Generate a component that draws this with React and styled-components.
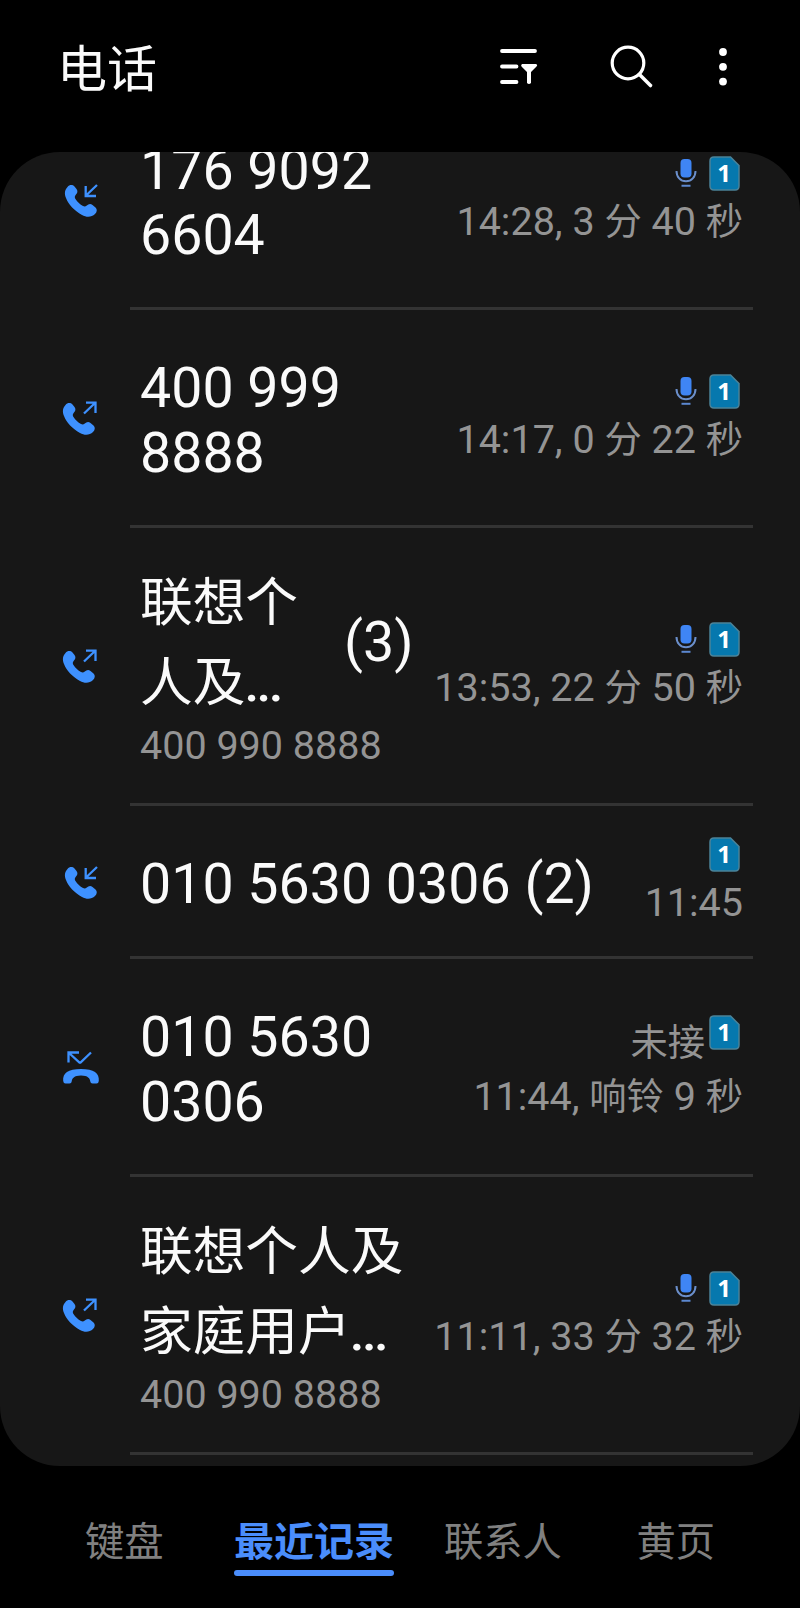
import React from "react"
import styled, {createGlobalStyle} from "styled-components"

const calls = [
  {id: 1, type: "in", lines: ["176 9092", "6604"], mic: true, time: ["14:28, 3 ", "分", " 40 ", "秒"]},
  {id: 2, type: "out", lines: ["400 999", "8888"], mic: true, time: ["14:17, 0 ", "分", " 22 ", "秒"]},
  {id: 3, type: "out", name: ["联想个", "人及"], count: "(3)", number: "400 990 8888", mic: true, time: ["13:53, 22 ", "分", " 50 ", "秒"]},
  {id: 4, type: "in", lines: ["010 5630 0306 (2)"], short: true, time: ["11:45"]},
  {id: 5, type: "missed", lines: ["010 5630", "0306"], missed: "未接", time: ["11:44, ", "响铃", " 9 ", "秒"]},
  {id: 6, type: "out", name: ["联想个人及", "家庭用户"], number: "400 990 8888", mic: true, time: ["11:11, 33 ", "分", " 32 ", "秒"]},
]

const tabs = ["键盘", "最近记录", "联系人", "黄页"]

const handset = "M4 3C6 0.500 9 0.500 11 2.500L13 5C14.500 7 14 9 12.500 10.500C11 12 11 13.500 12 15C14 18 16.500 20.500 19.500 22C21 22.800 22 22.500 23.300 21.500C25 20 27 19.500 29 21L32 23.500C34 25.500 33.500 28 31.500 30C28 33.500 23 33.500 18.500 31C10.500 26.500 5 20.500 2.500 14C0.800 10 1 6 4 3Z"

const CallIcon = ({type})=>{
  if(type === "missed"){
    return(
      <Svg width="40" height="40" viewBox="0 0 40 40">
        <path d="M6.500 14.500V4.500H17M6.500 4.500L17.500 14.500L18.500 14.500L29 4.500" fill="none" stroke="#3e91ff" strokeWidth="2.300"/>
        <path d="M1.200 33C0.500 25 6 21 19 21C32 21 37.500 25 36.800 33Q36.500 35.500 34.500 35.500H30.500Q28.500 35.500 28.300 33.500C28 30.500 26 27.500 19 27.500C12 27.500 10 30.500 9.700 33.500Q9.500 35.500 7.500 35.500H3.500Q1.500 35.500 1.200 33Z" fill="#3e91ff"/>
      </Svg>
    )
  }
  return(
    <Svg width="40" height="40" viewBox="0 0 40 40">
      <g transform={type === "in" ? "translate(1.500 3)" : "translate(-0.500 3)"}>
        <path d={handset} fill="#3e91ff"/>
      </g>
      {
        type === "in"
        ? <path d="M35 4L24 14.500M23.700 5V15H34" fill="none" stroke="#3e91ff" strokeWidth="2.300"/>
        : <path d="M22 14.500L33 4M24 3.700H33.500V14" fill="none" stroke="#3e91ff" strokeWidth="2.300"/>
      }
    </Svg>
  )
}

const Mic = ()=>(
  <MicSvg width="22" height="30" viewBox="0 0 22 30">
    <rect x="5.500" y="1" width="11" height="18.500" rx="4" fill="#3f85f4"/>
    <path d="M1.500 13C1.500 19 5.500 23.300 11 23.300S20.500 19 20.500 13" fill="none" stroke="#6b8fcb" strokeWidth="2"/>
    <path d="M6.500 27.800H15.500" stroke="#5c88d0" strokeWidth="2"/>
  </MicSvg>
)

const Sim = ()=>(
  <SimBox>
    <Svg width="31" height="35" viewBox="0 0 31 35">
      <path d="M5 1H21.500L30 9.500V30Q30 34 26 34H5Q1 34 1 30V5Q1 1 5 1Z" fill="#0678ae" stroke="#4b8298" strokeWidth="1.500"/>
    </Svg>
    <SimNumber>1</SimNumber>
  </SimBox>
)

const App = ()=>{
  return(
    <Container>
      <Global/>
      <Header>
        <Title>电话</Title>
        <Svg width="38" height="38" viewBox="0 0 38 38">
          <path d="M2 3H35M2 18.500H16.500M2 34H16.500" stroke="#fff" strokeWidth="3.800" strokeLinecap="round"/>
          <path d="M22 16H36Q38 17 36.500 18.500L31 24V35Q29 37 27 35V24L21.500 18.500Q20.500 17 22 16Z" fill="#fff"/>
        </Svg>
        <SearchIcon width="44" height="44" viewBox="0 0 44 44">
          <circle cx="18" cy="18" r="15.800" fill="none" stroke="#fff" strokeWidth="3.200"/>
          <path d="M29.500 29.500L40.500 40.500" stroke="#fff" strokeWidth="3.600" strokeLinecap="round"/>
        </SearchIcon>
        <Svg width="8" height="38" viewBox="0 0 8 38">
          <circle cx="4" cy="4" r="3.900" fill="#fff"/>
          <circle cx="4" cy="18.800" r="3.900" fill="#fff"/>
          <circle cx="4" cy="33.600" r="3.900" fill="#fff"/>
        </Svg>
      </Header>
      <Panel>
        {
          calls.map((props)=>(
            <Row key={props.id} $tall={!!props.name} $short={props.short}>
              <IconHolder>
                <CallIcon type={props.type}/>
              </IconHolder>
              <Content>
                <Who>
                  {
                    props.name
                    ? <>
                        <NameLine>
                          <Name>
                            <div>{props.name[0]}</div>
                            <div>{props.name[1]}<Dots>...</Dots></div>
                          </Name>
                          {props.count && <Count>{props.count}</Count>}
                        </NameLine>
                        <Number>{props.number}</Number>
                      </>
                    : <Phone>{props.lines.map((line)=> <div key={line}>{line}</div>)}</Phone>
                  }
                </Who>
                <Info>
                  <Badges $missed={!!props.missed}>
                    {props.mic && <Mic/>}
                    {props.missed && <Missed>{props.missed}</Missed>}
                    <Sim/>
                  </Badges>
                  <Time>
                    {props.time.map((part, i)=> i % 2 ? <Unit key={i}>{part}</Unit> : part)}
                  </Time>
                </Info>
              </Content>
            </Row>
          ))
        }
      </Panel>
      <Tabs>
        {
          tabs.map((tab)=>(
            <Tab key={tab} $active={tab === "最近记录"}>{tab}</Tab>
          ))
        }
      </Tabs>
    </Container>
  )
}
export default App

const Global = createGlobalStyle`
  body{
    margin: 0;
    background-color: #000;
  }
`
const Container = styled.div`
  width: 800px;
  height: 1608px;
  display: flex;
  flex-direction: column;
  overflow: hidden;
  background-color: #000;
  color: #fafafa;
  font-family: Roboto, "Noto Sans CJK SC", sans-serif;
`
const Svg = styled.svg`
  display: block;
  flex-shrink: 0;
`
const MicSvg = styled(Svg)`
  margin-top: 2px;
`
const Header = styled.div`
  height: 152px;
  box-sizing: border-box;
  padding: 0 73px 18px 57px;
  display: flex;
  align-items: center;
  flex-shrink: 0;
`
const Title = styled.div`
  flex: 1;
  padding-top: 6px;
  font-size: 50px;
  line-height: 70px;
`
const SearchIcon = styled(Svg)`
  margin: 0 65px 0 72px;
`
const Panel = styled.div`
  height: 1314px;
  flex-shrink: 0;
  display: flex;
  flex-direction: column;
  justify-content: flex-end;
  box-sizing: border-box;
  padding-bottom: 11px;
  overflow: hidden;
  border-radius: 60px;
  background-color: #171717;
`
const Row = styled.div`
  height: ${({$tall, $short})=> $tall ? "278px" : $short ? "153px" : "218px"};
  flex-shrink: 0;
  display: flex;
`
const IconHolder = styled.div`
  width: 130px;
  box-sizing: border-box;
  padding-left: 62px;
  display: flex;
  align-items: center;
`
const Content = styled.div`
  width: 623px;
  box-sizing: border-box;
  padding: 0 10px;
  border-bottom: 3px solid #333;
  display: flex;
  justify-content: space-between;
  align-items: center;
`
const Who = styled.div`
  display: flex;
  flex-direction: column;
  white-space: nowrap;
`
const Phone = styled.div`
  padding-top: 7px;
  font-size: 55.5px;
  line-height: 65.3px;
`
const NameLine = styled.div`
  display: flex;
  align-items: center;
`
const Name = styled.div`
  font-size: 52.7px;
  line-height: 80px;
`
const Dots = styled.span`
  margin-left: -1px;
  letter-spacing: -2.5px;
  font-weight: 500;
`
const Count = styled.div`
  margin-left: 46px;
  font-size: 55.5px;
`
const Number = styled.div`
  font-size: 39.5px;
  line-height: 46px;
  color: #949494;
`
const Info = styled.div`
  padding-top: 6px;
  display: flex;
  flex-direction: column;
  align-items: flex-end;
  white-space: nowrap;
`
const Badges = styled.div`
  height: ${({$missed})=> $missed ? "54px" : "38px"};
  padding-right: 3.500px;
  display: flex;
  align-items: flex-start;
  gap: 11.500px;
`
const SimBox = styled.div`
  position: relative;
`
const SimNumber = styled.span`
  position: absolute;
  inset: 0;
  text-align: center;
  font-family: "Noto Sans", sans-serif;
  font-size: 24px;
  font-weight: 700;
  line-height: 34px;
  color: #fff;
`
const Missed = styled.div`
  margin: 1px -8px 0 0;
  font-size: 37.3px;
  line-height: 54px;
  color: #949494;
`
const Time = styled.div`
  font-size: 39.5px;
  line-height: 56px;
  color: #949494;
`
const Unit = styled.span`
  font-size: 37.3px;
`
const Tabs = styled.div`
  flex: 1;
  padding: 50px 84px 0 85px;
  display: grid;
  grid-template-columns: 149px 210px 192.5px 80px;
  align-items: flex-start;
`
const Tab = styled.div`
  justify-self: start;
  font-size: ${({$active})=> $active ? "40px" : "39.3px"};
  line-height: 54px;
  color: ${({$active})=> $active ? "#4a8dfb" : "#808080"};
  font-weight: ${({$active})=> $active ? 700 : 400};

  &::after{
    content: "";
    display: block;
    height: 6px;
    border-radius: 3px;
    background-color: ${({$active})=> $active ? "#4a8dfb" : "transparent"};
  }
`
